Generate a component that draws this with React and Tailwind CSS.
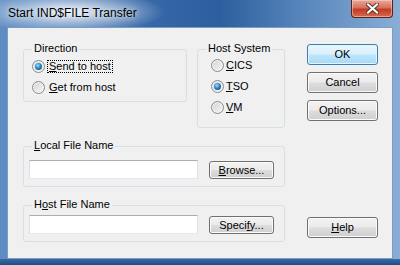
import React from "react";

function Radio({ checked }) {
  return (
    <div className="w-[13px] h-[13px] rounded-full border border-[#8a8a8a] bg-[linear-gradient(135deg,#d2d2d2,#f7f7f7)] shadow-[inset_0_0_0_1px_#f4f4f4] flex items-center justify-center shrink-0">
      {checked && (
        <div className="w-[7px] h-[7px] rounded-full bg-[radial-gradient(circle_at_40%_35%,#9fe0ff_0%,#2b86c8_45%,#0d3f72_100%)]" />
      )}
    </div>
  );
}

function Btn({ children, primary, className }) {
  return (
    <div
      className={`flex items-center justify-center rounded-[3px] border text-[11px] leading-[13px] ${
        primary
          ? "border-[#3c7fb1] bg-[linear-gradient(to_bottom,#eaf6fd_0%,#d9f0fc_48%,#bee6fd_52%,#a7d9f5_100%)] shadow-[inset_0_0_0_1px_#e3f4fc]"
          : "border-[#707070] bg-[linear-gradient(to_bottom,#f2f2f2_0%,#ebebeb_48%,#dddddd_52%,#cfcfcf_100%)] shadow-[inset_0_0_0_1px_#fbfbfb]"
      } ${className}`}
    >
      {children}
    </div>
  );
}

function Group({ label, className, children }) {
  return (
    <div className={`relative border border-[#d5dfe5] rounded-[3px] ${className}`}>
      <span className="absolute left-[8px] top-[-8px] px-[2px] bg-[#f0f0f0] leading-[13px]">
        {label}
      </span>
      {children}
    </div>
  );
}

function TextBox() {
  return (
    <div className="w-[169px] h-[19px] bg-white border border-[#dbdfe6] border-t-[#abadb3] border-b-[#e3e9ef]" />
  );
}

export default function App() {
  return (
    <div
      className="w-[400px] h-[265px] flex flex-col overflow-hidden bg-[radial-gradient(ellipse_95px_22px_at_70px_12px,rgba(255,255,255,0.9),rgba(255,255,255,0)),linear-gradient(to_right,#5f8dc3_0%,#3566a6_40%,#2c5f9e_55%,#5684bb_75%,#8aaed6_100%)] text-black"
      style={{ fontFamily: '"Liberation Sans", Arial, sans-serif' }}
    >
      <div className="h-[27px] flex items-start shrink-0">
        <div className="pl-[8px] pt-[6px] text-[12px] leading-[15px] text-black [text-shadow:0_0_6px_#fff]">
          Start IND$FILE Transfer
        </div>
        <div className="ml-auto mr-[7px] w-[42px] h-[18px] rounded-b-[4px] border border-t-0 border-[#5b2219] bg-[linear-gradient(to_bottom,#e9a99a_0%,#d7705c_45%,#c23b22_55%,#d66a4e_100%)] shadow-[inset_0_0_0_1px_rgba(255,220,210,0.5)] flex items-center justify-center">
          <svg width="13" height="11" viewBox="0 0 13 11">
            <path d="M2 1.5 L11 9.5 M11 1.5 L2 9.5" stroke="#5a3a35" strokeWidth="4" strokeLinecap="square" />
            <path d="M2 1.5 L11 9.5 M11 1.5 L2 9.5" stroke="#ffffff" strokeWidth="2" strokeLinecap="square" />
          </svg>
        </div>
      </div>

      <div className="mx-[7px] h-[232px] border border-[#7b9cc4] bg-[#f0f0f0] flex items-start text-[11px] leading-[13px] shrink-0">
        <div className="ml-[15px] mt-[21px] w-[262px] flex flex-col">
          <div className="flex items-start">
            <Group label="Direction" className="w-[164px] h-[53px]">
              <div className="pt-[10px] pl-[8px] flex flex-col gap-[8px]">
                <div className="flex items-center h-[13px]">
                  <Radio checked />
                  <span className="ml-[2px] px-[1px] border border-dotted border-black leading-[11px]">
                    <u>S</u>end to host
                  </span>
                </div>
                <div className="flex items-center h-[13px]">
                  <Radio />
                  <span className="ml-[3px] px-[1px]">
                    <u>G</u>et from host
                  </span>
                </div>
              </div>
            </Group>
            <Group label="Host System" className="ml-[10px] w-[88px] h-[79px]">
              <div className="pt-[9px] pl-[13px] flex flex-col gap-[8px]">
                <div className="flex items-center h-[13px]">
                  <Radio />
                  <span className="ml-[2px]">
                    <u>C</u>ICS
                  </span>
                </div>
                <div className="flex items-center h-[13px]">
                  <Radio checked />
                  <span className="ml-[2px]">
                    <u>T</u>SO
                  </span>
                </div>
                <div className="flex items-center h-[13px]">
                  <Radio />
                  <span className="ml-[2px]">
                    <u>V</u>M
                  </span>
                </div>
              </div>
            </Group>
          </div>

          <Group
            label={
              <>
                <u>L</u>ocal File Name
              </>
            }
            className="mt-[18px] w-[262px] h-[41px]"
          >
            <div className="pt-[13px] pl-[5px] flex items-start">
              <TextBox />
              <Btn className="ml-[11px] mt-[1px] w-[65px] h-[18px]">
                <span>
                  <u>B</u>rowse...
                </span>
              </Btn>
            </div>
          </Group>

          <Group
            label={
              <>
                H<u>o</u>st File Name
              </>
            }
            className="mt-[18px] w-[262px] h-[37px]"
          >
            <div className="pt-[9px] pl-[5px] flex items-start">
              <TextBox />
              <Btn className="ml-[11px] mt-[1px] w-[65px] h-[18px]">
                <span>
                  Speci<u>f</u>y...
                </span>
              </Btn>
            </div>
          </Group>
        </div>

        <div className="ml-[22px] mt-[16px] w-[71px] flex flex-col">
          <Btn primary className="h-[21px]">
            OK
          </Btn>
          <Btn className="mt-[7px] h-[21px]">Cancel</Btn>
          <Btn className="mt-[7px] h-[21px]">Options...</Btn>
          <Btn className="mt-[96px] h-[21px]">
            <span>
              <u>H</u>elp
            </span>
          </Btn>
        </div>
      </div>

      <div className="flex-1 bg-[linear-gradient(to_bottom,#3a6aa5,#1f4c86)]" />
    </div>
  );
}
